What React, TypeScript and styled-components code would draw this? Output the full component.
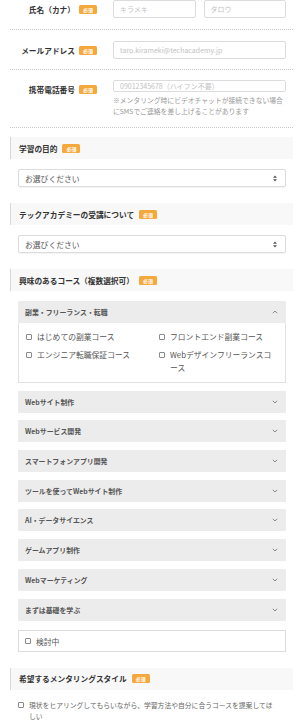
import React from "react";
import styled, { createGlobalStyle } from "styled-components";

const GlobalStyle = createGlobalStyle`
  * { box-sizing: border-box; }
  body {
    margin: 0;
    background: #fff;
    font-family: "Noto Sans CJK JP", "Noto Sans", sans-serif;
    color: #333;
  }
`;

const otherCourses = [
  "Webサイト制作",
  "Webサービス開発",
  "スマートフォンアプリ開発",
  "ツールを使ってWebサイト制作",
  "AI・データサイエンス",
  "ゲームアプリ制作",
  "Webマーケティング",
  "まずは基礎を学ぶ",
];

const sideJobCourses = [
  "はじめての副業コース",
  "フロントエンド副業コース",
  "エンジニア転職保証コース",
  "Webデザインフリーランスコース",
];

function Chevron({ up }: { up?: boolean }) {
  return (
    <svg width="6" height="4" viewBox="0 0 6 4">
      <polyline
        points={up ? "0.8,3.2 3,1 5.2,3.2" : "0.8,0.8 3,3 5.2,0.8"}
        fill="none"
        stroke="#888"
        strokeWidth="1"
      />
    </svg>
  );
}

function SelectArrows() {
  return (
    <svg width="4" height="7" viewBox="0 0 4 7">
      <polygon points="0,2.8 2,0.6 4,2.8" fill="#555" />
      <polygon points="0,4.2 2,6.4 4,4.2" fill="#555" />
    </svg>
  );
}

function App() {
  return (
    <Page lang="ja">
      <GlobalStyle />
      <FormRow $pt={0} $pb={11}>
        <LabelCell>
          <LabelText>氏名（カナ）</LabelText>
          <Badge>必須</Badge>
        </LabelCell>
        <Fields>
          <Input placeholder="キラメキ" />
          <Input placeholder="タロウ" />
        </Fields>
      </FormRow>
      <FormRow $pt={11} $pb={10}>
        <LabelCell>
          <LabelText>メールアドレス</LabelText>
          <Badge>必須</Badge>
        </LabelCell>
        <Fields>
          <Input placeholder="taro.kirameki@techacademy.jp" />
        </Fields>
      </FormRow>
      <FormRow $pt={10} $pb={10}>
        <LabelCell>
          <LabelText>携帯電話番号</LabelText>
          <Badge>必須</Badge>
        </LabelCell>
        <FieldColumn>
          <Input placeholder="09012345678（ハイフン不要）" />
          <Note>
            ※メンタリング時にビデオチャットが接続できない場合にSMSでご連絡を差し上げることがあります
          </Note>
        </FieldColumn>
      </FormRow>

      <Sections>
        <Section>
          <SectionHeader>
            <span>学習の目的</span>
            <Badge>必須</Badge>
          </SectionHeader>
          <SectionBody>
            <SelectBox>
              <span>お選びください</span>
              <SelectArrows />
            </SelectBox>
          </SectionBody>
        </Section>

        <Section>
          <SectionHeader>
            <span>テックアカデミーの受講について</span>
            <Badge>必須</Badge>
          </SectionHeader>
          <SectionBody>
            <SelectBox>
              <span>お選びください</span>
              <SelectArrows />
            </SelectBox>
          </SectionBody>
        </Section>

        <Section>
          <SectionHeader>
            <span>興味のあるコース（複数選択可）</span>
            <Badge>必須</Badge>
          </SectionHeader>
          <SectionBody>
            <AccordionList>
              <div>
                <AccordionHeader>
                  <span>副業・フリーランス・転職</span>
                  <Chevron up />
                </AccordionHeader>
                <AccordionBody>
                  {sideJobCourses.map((c) => (
                    <CheckItem key={c}>
                      <Box />
                      <span>{c}</span>
                    </CheckItem>
                  ))}
                </AccordionBody>
              </div>
              {otherCourses.map((c) => (
                <AccordionHeader key={c}>
                  <span>{c}</span>
                  <Chevron />
                </AccordionHeader>
              ))}
            </AccordionList>
            <PendingBox>
              <Box />
              <span>検討中</span>
            </PendingBox>
          </SectionBody>
        </Section>

        <Section>
          <SectionHeader>
            <span>希望するメンタリングスタイル</span>
            <Badge>必須</Badge>
          </SectionHeader>
          <SectionBody>
            <StyleOption>
              <Box />
              <span>
                現状をヒアリングしてもらいながら、学習方法や自分に合うコースを提案してほしい
              </span>
            </StyleOption>
          </SectionBody>
        </Section>
      </Sections>
    </Page>
  );
}

const Page = styled.div`
  width: 300px;
  padding: 0 7px 0 10px;
`;

const FormRow = styled.div<{ $pt: number; $pb: number }>`
  display: flex;
  align-items: flex-start;
  padding: ${({ $pt }) => $pt}px 7px ${({ $pb }) => $pb}px 0;
  border-bottom: 1px dotted #c8c8c8;
`;

const LabelCell = styled.div`
  width: 103px;
  height: 18px;
  display: flex;
  align-items: center;
  justify-content: flex-end;
  gap: 4px;
  padding-right: 16px;
  flex-shrink: 0;
`;

const LabelText = styled.span`
  font-size: 7.7px;
  font-weight: 700;
  color: #333;
  white-space: nowrap;
`;

const Badge = styled.span`
  display: inline-flex;
  align-items: center;
  justify-content: center;
  width: 18px;
  height: 9px;
  border-radius: 1.5px;
  background: #f5a83b;
  color: #fff;
  font-size: 5px;
  font-weight: 700;
  line-height: 1;
  flex-shrink: 0;
`;

const Fields = styled.div`
  flex: 1;
  display: flex;
  gap: 8px;
`;

const FieldColumn = styled.div`
  flex: 1;
  display: flex;
  flex-direction: column;
`;

const Input = styled.input`
  flex: 1;
  min-width: 0;
  width: 100%;
  height: 18px;
  padding: 0 6px;
  border: 1px solid #dcdcdc;
  border-radius: 2px;
  font-family: inherit;
  font-size: 7px;
  color: #333;
  outline: none;

  &::placeholder {
    color: #c2c2c2;
  }
`;

const Note = styled.p`
  margin: 3px 0 0;
  font-size: 6.8px;
  line-height: 11px;
  color: #9a9a9a;
`;

const Sections = styled.div`
  margin-top: 9px;
`;

const Section = styled.section``;

const SectionHeader = styled.div`
  height: 22px;
  display: flex;
  align-items: center;
  gap: 5px;
  padding-left: 8px;
  background: #f8f8f8;
  border-left: 1px solid #d8d8d8;
  font-size: 7.7px;
  font-weight: 700;
  color: #333;
`;

const SectionBody = styled.div`
  padding: 10px 7px 16px 8px;
`;

const SelectBox = styled.div`
  height: 18px;
  display: flex;
  align-items: center;
  justify-content: space-between;
  padding: 0 8px 0 6px;
  border: 1px solid #dcdcdc;
  border-radius: 2px;
  box-shadow: 0 1px 1px rgba(0, 0, 0, 0.05);
  font-size: 7.8px;
  color: #555;
`;

const AccordionList = styled.div`
  display: flex;
  flex-direction: column;
  gap: 7.7px;
`;

const AccordionHeader = styled.div`
  height: 22px;
  display: flex;
  align-items: center;
  justify-content: space-between;
  padding: 0 8px 0 7px;
  background: #ececec;
  font-size: 6.9px;
  font-weight: 700;
  color: #555;
`;

const AccordionBody = styled.div`
  display: grid;
  grid-template-columns: 1fr 1fr;
  row-gap: 5px;
  padding: 7px 0 8px;
  border: 1px solid #e2e2e2;
  border-top: none;
  background: #fff;
`;

const CheckItem = styled.label`
  display: flex;
  align-items: flex-start;
  gap: 5px;
  padding: 0 12px 0 7px;
  font-size: 7.8px;
  line-height: 13px;
  color: #555;
  line-break: anywhere;
`;

const Box = styled.span`
  width: 6px;
  height: 6px;
  margin-top: 3.5px;
  border: 1px solid #8a8a8a;
  border-radius: 1px;
  background: #fff;
  flex-shrink: 0;
`;

const PendingBox = styled.label`
  margin-top: 9px;
  height: 22px;
  display: flex;
  align-items: flex-start;
  gap: 5px;
  padding: 4px 6px 0;
  border: 1px solid #dcdcdc;
  font-size: 7.8px;
  line-height: 13px;
  color: #555;
`;

const StyleOption = styled.label`
  display: flex;
  align-items: flex-start;
  gap: 5px;
  padding-right: 12px;
  font-size: 6.8px;
  line-height: 11px;
  color: #666;
  line-break: anywhere;

  ${Box} {
    margin-top: 2.5px;
  }
`;

export default App;
